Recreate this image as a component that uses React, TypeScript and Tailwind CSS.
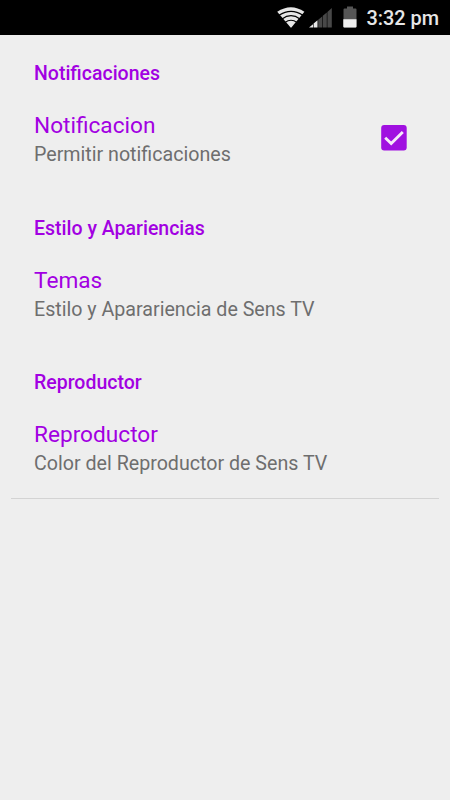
const sections = [
  { heading: 'Notificaciones', title: 'Notificacion', summary: 'Permitir notificaciones', checked: true },
  { heading: 'Estilo y Apariencias', title: 'Temas', summary: 'Estilo y Aparariencia de Sens TV', checked: false },
  { heading: 'Reproductor', title: 'Reproductor', summary: 'Color del Reproductor de Sens TV', checked: false },
];

export default function App() {
  return (
    <div className="h-[800px] w-[450px] overflow-hidden bg-[#eeeeee] font-[Roboto,sans-serif]">
      <header className="flex h-[35px] items-start justify-end bg-black pr-[11px] text-[#e6e6e6]">
        <svg className="mr-[4px] mt-[6px] h-[22px] w-[28px]" viewBox="0 0 28 22">
          <path d="M0.200 5.800Q14-3.400 27.400 5.800L14.600 21.300Q14 22 13.400 21.300Z" fill="#e6e6e6" />
          <path d="M2 9.200Q14 1.400 26 9.200M5 12.900Q14 6.500 23 12.900M8 16.500Q14 12 20 16.500" fill="none" stroke="#000" strokeWidth="1.200" />
        </svg>
        <svg className="mr-[11px] mt-[8px] h-[20px] w-[23px]" viewBox="0 0 23 20">
          <path d="M0 19.500L4 16.200V19.500ZM4.600 19.500V15.600L8.500 12.300V19.500Z" fill="#e6e6e6" />
          <path d="M9.200 19.500V11.700L13.200 8.400V19.500ZM13.800 19.500V7.800L17.800 4.400V19.500ZM18.400 19.500V3.900L22.800 0.100V19.500Z" fill="#484848" />
        </svg>
        <svg className="mr-[9px] mt-[6px] h-[22px] w-[14px]" viewBox="0 0 14 22">
          <path d="M4 0.500h6v2h2.500q1 0 1 1V20.500q0 1-1 1h-11q-1 0-1-1V3.500q0-1 1-1H4Z" fill="#555" />
          <path d="M0.300 13.300h13.200v7.200q0 1-1 1h-11.200q-1 0-1-1Z" fill="#eee" />
        </svg>
        <span className="pt-px text-[19.9px] font-medium leading-[35px]">3:32 pm</span>
      </header>
      <main className="px-[11px] pt-[0.5px]">
        {sections.map((s) => (
          <section key={s.heading} className="h-[154.5px] px-[23px] pt-[26.5px] last:border-b last:border-[#d3d3d3]">
            <h2 className="text-[19.5px] font-medium leading-[24px] text-[#a200e2]">{s.heading}</h2>
            <div className="mt-[25px] flex items-start justify-between">
              <div>
                <h3 className="text-[22.65px] leading-[30px] text-[#a200e2]">{s.title}</h3>
                <p className="text-[19.65px] leading-[28px] text-[#6e6e6e]">{s.summary}</p>
              </div>
              {s.checked && (
                <svg className="mr-[9px] mt-[14px] h-[26px] w-[26px]" viewBox="0 0 26 26">
                  <rect x="0.200" y="0.100" width="25.500" height="25.500" rx="3" fill="#a010e0" />
                  <path d="M4.200 12.700L10.200 18.500L21.800 7" fill="none" stroke="#f4eaf8" strokeWidth="2.900" />
                </svg>
              )}
            </div>
          </section>
        ))}
      </main>
    </div>
  );
}
